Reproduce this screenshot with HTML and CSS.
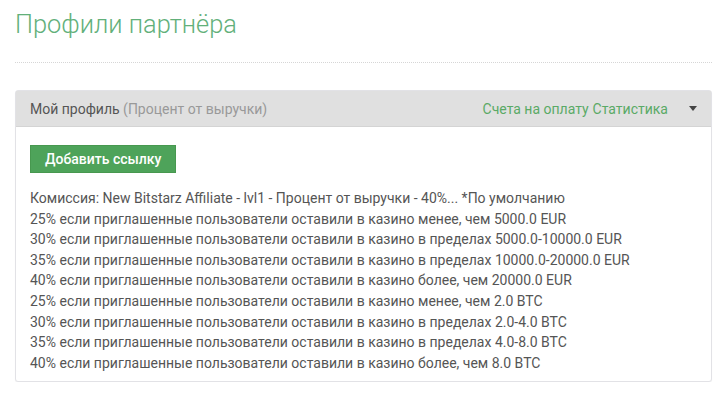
FILE: index.html
```html
<!DOCTYPE html>
<html lang="ru">
<head>
<meta charset="utf-8">
<link rel="stylesheet" href="styles.css">
</head>
<body>
<div class="page">
  <h1 class="title">Профили партнёра</h1>
  <hr class="divider">
  <div class="panel">
    <div class="panel-head">
      <div class="panel-title">Мой профиль <span class="muted">(Процент от выручки)</span></div>
      <div class="panel-links">
        <a class="link">Счета на оплату</a>
        <a class="link">Статистика</a>
        <span class="caret"></span>
      </div>
    </div>
    <div class="panel-body">
      <button class="btn">Добавить ссылку</button>
      <div class="lines">
        <div>Комиссия: New Bitstarz Affiliate - lvl1 - Процент от выручки - 40%... *По умолчанию</div>
        <div>25% если приглашенные пользователи оставили в казино менее, чем 5000.0 EUR</div>
        <div>30% если приглашенные пользователи оставили в казино в пределах 5000.0-10000.0 EUR</div>
        <div>35% если приглашенные пользователи оставили в казино в пределах 10000.0-20000.0 EUR</div>
        <div>40% если приглашенные пользователи оставили в казино более, чем 20000.0 EUR</div>
        <div>25% если приглашенные пользователи оставили в казино менее, чем 2.0 BTC</div>
        <div>30% если приглашенные пользователи оставили в казино в пределах 2.0-4.0 BTC</div>
        <div>35% если приглашенные пользователи оставили в казино в пределах 4.0-8.0 BTC</div>
        <div>40% если приглашенные пользователи оставили в казино более, чем 8.0 BTC</div>
      </div>
    </div>
  </div>
</div>
</body>
</html>
```

FILE: styles.css
```css
html, body {
  margin: 0;
  padding: 0;
  background: #ffffff;
}
body {
  font-family: Roboto, "Liberation Sans", sans-serif;
  color: #555555;
}
.page {
  padding: 0 13px 0 15px;
}
.title {
  margin: 0;
  padding-top: 7px;
  font-size: 25.4px;
  line-height: 34px;
  font-weight: 300;
  color: #62b07a;
  height: 40px;
}
.divider {
  margin: 15px 0 0 0;
  border: 0;
  border-top: 1px dotted #d6d6d6;
  height: 0;
}
.panel {
  margin-top: 27px;
  border: 1px solid #e2e2e6;
  border-radius: 3px;
  background: #fff;
  box-shadow: 0 1px 1px rgba(0,0,0,0.05);
}
.panel-head {
  display: flex;
  justify-content: space-between;
  align-items: center;
  height: 35px;
  padding: 0 14px 0 14px;
  background: #e0e0e0;
  border-bottom: 1px solid #d4d4d4;
  font-size: 14px;
}
.panel-title {
  color: #555;
}
.muted {
  color: #999;
}
.panel-links {
  display: flex;
  align-items: center;
  gap: 4px;
}
.link {
  color: #5aaa66;
}
.caret {
  margin-left: 17px;
  width: 0;
  height: 0;
  border-left: 4px solid transparent;
  border-right: 4px solid transparent;
  border-top: 5px solid #444;
}
.panel-body {
  padding: 18px 14px 8px 14px;
}
.btn {
  display: block;
  background: #4ea35a;
  color: #fff;
  border: 1px solid #47984f;
  font-family: Roboto, "Liberation Sans", sans-serif;
  font-size: 14px;
  font-weight: 500;
  height: 28px;
  padding: 0 14px;
  border-radius: 0;
}
.lines {
  margin-top: 15px;
  font-size: 14px;
  line-height: 20.6px;
  color: #555;
}
```
